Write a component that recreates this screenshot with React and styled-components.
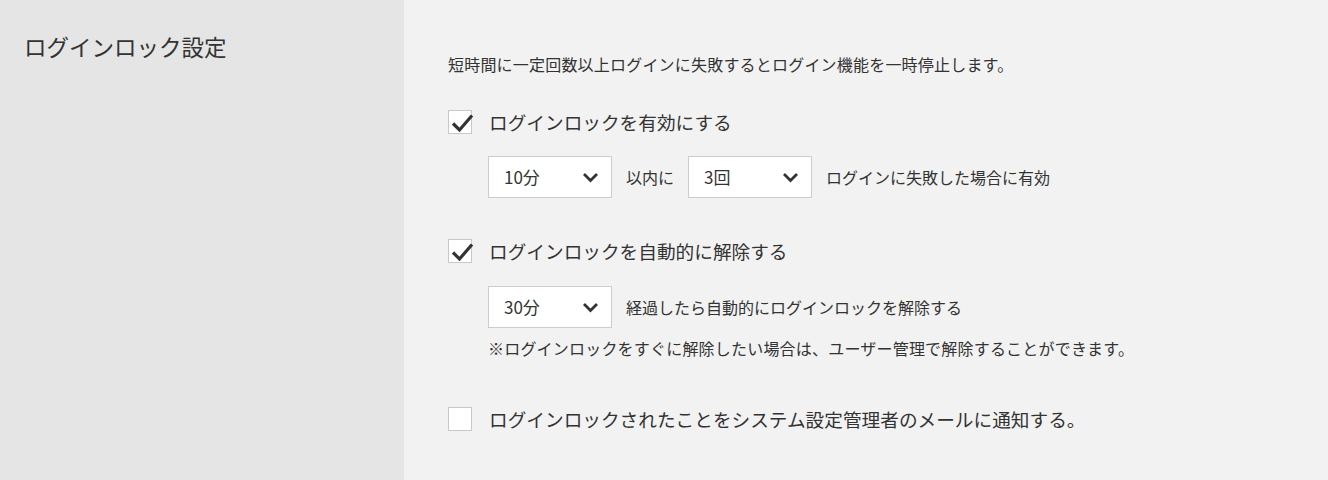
import React from 'react';
import styled, { createGlobalStyle } from 'styled-components';

const GlobalStyle = createGlobalStyle`
  html, body {
    margin: 0;
    padding: 0;
    background: #f2f2f2;
  }
  body {
    font-family: "Noto Sans CJK JP", "Noto Sans", sans-serif;
    color: #333;
  }
`;

const StyledPage = styled.div`
  display: flex;
  width: 1328px;
  height: 480px;
  overflow: hidden;
`;

const StyledSide = styled.aside`
  width: 404px;
  flex-shrink: 0;
  box-sizing: border-box;
  padding: 29px 24px;
  background: #e5e5e5;

  h2 {
    margin: 0;
    font-size: 22.5px;
    font-weight: 400;
    line-height: 34px;
    color: #333;
  }
`;

const StyledMain = styled.section`
  flex: 1;
  box-sizing: border-box;
  padding: 52px 44px;
  background: #f2f2f2;
  display: flex;
  flex-direction: column;
  align-items: flex-start;

  .desc {
    margin: 0;
    font-size: 16px;
    line-height: 24px;
    letter-spacing: 0.2px;
  }

  .note {
    margin: 8px 0 0 40px;
    font-size: 16px;
    line-height: 24px;
    letter-spacing: 0.2px;
  }
`;

const StyledCheckRow = styled.label`
  display: flex;
  align-items: center;
  gap: 17px;
  margin-top: ${({ $gap }) => $gap}px;
  height: 24px;
  font-size: 18.67px;
  line-height: 24px;
  cursor: pointer;
`;

const StyledBox = styled.span`
  position: relative;
  width: 24px;
  height: 24px;
  box-sizing: border-box;
  border: 1px solid #c8c8c8;
  background: #fff;
  flex-shrink: 0;

  svg {
    position: absolute;
    left: 2px;
    top: 1px;
    width: 24px;
    height: 22px;
  }
`;

const StyledSubRow = styled.div`
  display: flex;
  align-items: center;
  gap: 14px;
  margin: ${({ $gap }) => $gap}px 0 0 40px;
  font-size: 16px;
  line-height: 24px;
`;

const StyledSelect = styled.div`
  display: flex;
  align-items: center;
  justify-content: space-between;
  width: 124px;
  height: 42px;
  box-sizing: border-box;
  padding: 0 12px 0 15px;
  border: 1px solid #cccccc;
  background: #fff;
  font-size: 17px;
  color: #333;

  svg {
    width: 17px;
    height: 11px;
  }
`;

const Check = () => (
  <svg viewBox="0 0 24 22" fill="none">
    <path d="M2 11.5 L8.5 18 L21 3.5" stroke="#333" strokeWidth="3.2" />
  </svg>
);

const Chevron = () => (
  <svg viewBox="0 0 17 11" fill="none">
    <path d="M2 2 L8.5 8.5 L15 2" stroke="#333" strokeWidth="2.8" />
  </svg>
);

const Checkbox = ({ checked, gap, children }) => (
  <StyledCheckRow $gap={gap}>
    <StyledBox>{checked && <Check />}</StyledBox>
    <span>{children}</span>
  </StyledCheckRow>
);

const Select = ({ value }) => (
  <StyledSelect>
    <span>{value}</span>
    <Chevron />
  </StyledSelect>
);

const App = () => (
  <>
    <GlobalStyle />
    <StyledPage>
      <StyledSide>
        <h2>ログインロック設定</h2>
      </StyledSide>
      <StyledMain>
        <p className="desc">
          短時間に一定回数以上ログインに失敗するとログイン機能を一時停止します。
        </p>

        <Checkbox checked gap={34}>ログインロックを有効にする</Checkbox>
        <StyledSubRow $gap={22}>
          <Select value="10分" />
          <span>以内に</span>
          <Select value="3回" />
          <span>ログインに失敗した場合に有効</span>
        </StyledSubRow>

        <Checkbox checked gap={41}>ログインロックを自動的に解除する</Checkbox>
        <StyledSubRow $gap={23}>
          <Select value="30分" />
          <span>経過したら自動的にログインロックを解除する</span>
        </StyledSubRow>
        <p className="note">
          ※ログインロックをすぐに解除したい場合は、ユーザー管理で解除することができます。
        </p>

        <Checkbox gap={47}>ログインロックされたことをシステム設定管理者のメールに通知する。</Checkbox>
      </StyledMain>
    </StyledPage>
  </>
);

export default App;
